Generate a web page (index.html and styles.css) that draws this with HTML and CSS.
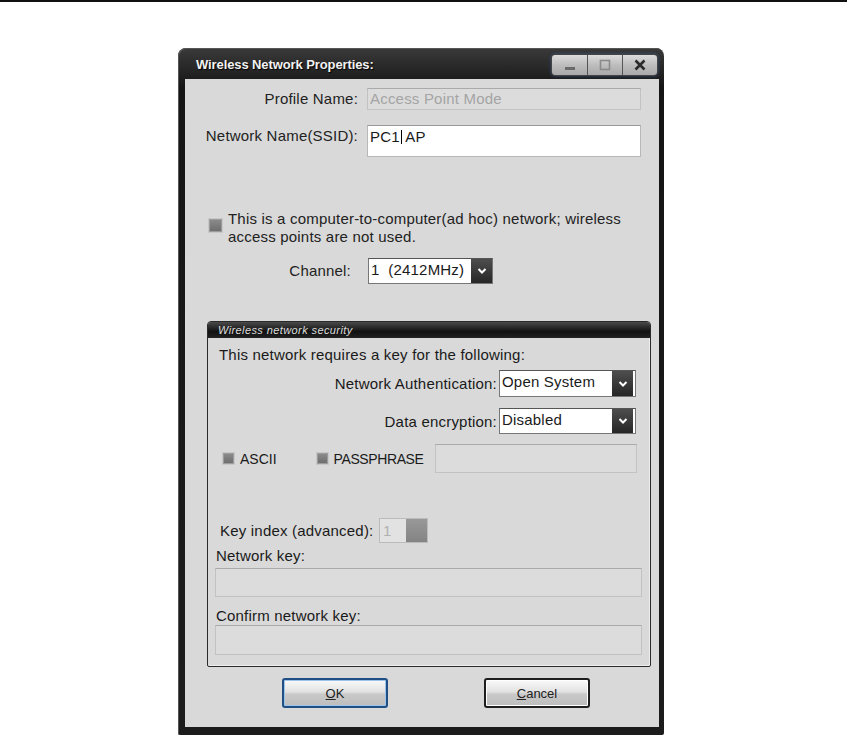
FILE: index.html
```html
<!DOCTYPE html>
<html lang="en">
<head>
  <meta charset="UTF-8">
  <title>Wireless Network Properties</title>
  <link rel="stylesheet" href="styles.css">
</head>
<body>
  <div class="rule"></div>
  <div class="window">
    <div class="titlebar">
      <span class="title">Wireless Network Properties:</span>
      <div class="win-btns">
        <span class="wbtn"><svg width="14" height="14" viewBox="0 0 14 14"><rect x="2" y="9" width="10" height="3" fill="#6a6a6a"/></svg></span>
        <span class="wbtn"><svg width="14" height="14" viewBox="0 0 14 14"><rect x="2.5" y="2.5" width="9" height="9" fill="none" stroke="#8a8a8a" stroke-width="1.6"/></svg></span>
        <span class="wbtn"><svg width="14" height="14" viewBox="0 0 14 14"><path d="M2.5 2.5 L11.5 11.5 M11.5 2.5 L2.5 11.5" stroke="#2a2a2a" stroke-width="2.6"/></svg></span>
      </div>
    </div>

    <div class="content">
      <div class="row">
        <span class="lbl">Profile Name:</span>
        <div class="field disabled short">Access Point Mode</div>
      </div>
      <div class="row ssid">
        <span class="lbl">Network Name(SSID):</span>
        <div class="field tall">PC1<span class="caret"></span> AP</div>
      </div>

      <div class="adhoc">
        <span class="check"></span>
        <p>This is a computer-to-computer(ad hoc) network; wireless<br>access points are not used.</p>
      </div>

      <div class="row channel">
        <span class="lbl">Channel:</span>
        <div class="select sel-channel">
          <span class="value">1&nbsp;&nbsp;(2412MHz)</span>
          <span class="arrow"><svg width="10" height="8" viewBox="0 0 10 8"><path d="M1.5 2 L5 5.5 L8.5 2" fill="none" stroke="#fff" stroke-width="2"/></svg></span>
        </div>
      </div>

      <div class="group">
        <div class="group-head">Wireless network security</div>
        <p class="intro">This network requires a key for the following:</p>

        <div class="pick auth">
          <span>Network Authentication:</span>
          <div class="select sel-wide">
            <span class="value">Open System</span>
            <span class="arrow"><svg width="10" height="8" viewBox="0 0 10 8"><path d="M1.5 2 L5 5.5 L8.5 2" fill="none" stroke="#fff" stroke-width="2"/></svg></span>
          </div>
        </div>
        <div class="pick enc">
          <span>Data encryption:</span>
          <div class="select sel-wide">
            <span class="value">Disabled</span>
            <span class="arrow"><svg width="10" height="8" viewBox="0 0 10 8"><path d="M1.5 2 L5 5.5 L8.5 2" fill="none" stroke="#fff" stroke-width="2"/></svg></span>
          </div>
        </div>

        <div class="keytype">
          <span class="check"></span><span class="opt ascii">ASCII</span>
          <span class="check"></span><span class="opt pp">PASSPHRASE</span>
          <div class="field disabled pass"></div>
        </div>

        <div class="keyindex">
          <span class="ki-lbl">Key index (advanced):</span>
          <div class="spin"><span class="spin-val">1</span><span class="spin-btn"></span></div>
        </div>

        <p class="small-lbl">Network key:</p>
        <div class="field disabled wide"></div>
        <p class="small-lbl confirm">Confirm network key:</p>
        <div class="field disabled wide last"></div>
      </div>

      <div class="actions">
        <button class="btn default"><u>O</u>K</button>
        <button class="btn"><u>C</u>ancel</button>
      </div>
    </div>
  </div>
</body>
</html>
```

FILE: styles.css
```css
* {
  margin: 0;
  padding: 0;
  box-sizing: border-box;
}
body {
  background: #fff;
  font-family: 'Liberation Sans', Arial, sans-serif;
  font-size: 15px;
  letter-spacing: 0.2px;
  color: #1a1a1a;
}
.rule {
  height: 2px;
  background: #111;
}
.window {
  width: 486px;
  margin: 46px 0 0 178px;
  background: linear-gradient(#3a3a3a, #151515 40px, #1c1c1c);
  border-radius: 8px 8px 2px 2px;
  padding: 0 5px 8px 7px;
  box-shadow: inset 1px 1px 0 #555;
}
.titlebar {
  height: 31px;
  display: flex;
  align-items: center;
  justify-content: space-between;
  padding-left: 11px;
}
.title {
  color: #f2f2f2;
  font-weight: bold;
  font-size: 13px;
  letter-spacing: -0.1px;
  text-shadow: 1px 1px 1px #000;
  margin-top: 2px;
}
.win-btns {
  display: flex;
  margin-right: 1px;
  margin-top: 2px;
  border: 1px solid #444;
  border-radius: 4px;
  overflow: hidden;
  box-shadow: 0 0 3px rgba(70, 120, 220, 0.5);
}
.wbtn {
  width: 35px;
  height: 20px;
  display: flex;
  align-items: center;
  justify-content: center;
  background: linear-gradient(#dcdcdc, #bdbdbd 50%, #a9a9a9);
  border-left: 1px solid #555;
}
.wbtn:first-child {
  border-left: none;
}
.content {
  background: #d9d9d9;
  height: 648px;
  padding-top: 9px;
  display: flex;
  flex-direction: column;
}
.row {
  display: flex;
  align-items: flex-start;
}
.lbl {
  width: 173px;
  margin-right: 9px;
  text-align: right;
  line-height: 22px;
  color: #222;
  white-space: nowrap;
}
.ssid {
  margin-top: 15px;
}
.field {
  background: #fff;
  border: 1px solid #b8b8b8;
  border-top-color: #999;
  padding: 2px 0 0 2px;
  line-height: 18px;
}
.field.short {
  width: 274px;
  height: 22px;
  padding-top: 1px;
}
.field.tall {
  width: 274px;
  height: 32px;
}
.field.disabled {
  background: #dcdcdc;
  border-color: #c2c2c2;
  border-top-color: #aaa;
  color: #a4a4a4;
}
.caret {
  display: inline-block;
  width: 1px;
  height: 14px;
  background: #000;
  vertical-align: -2px;
  margin-left: 1px;
}
.check {
  display: inline-block;
  width: 13px;
  height: 13px;
  background: linear-gradient(#8a8a8a, #6e6e6e);
  border: 1px solid #9c9c9c;
  box-shadow: 0 0 0 1px #c8c8c8;
  flex-shrink: 0;
}
.adhoc {
  display: flex;
  margin: 53px 0 0 24px;
}
.adhoc .check {
  margin-top: 9px;
  margin-right: 6px;
}
.adhoc p {
  line-height: 18px;
  color: #222;
  white-space: nowrap;
}
.channel {
  margin-top: 12px;
  align-items: center;
}
.channel .lbl {
  width: 166px;
  margin-right: 17px;
}
.select {
  display: flex;
  background: #fff;
  border: 1px solid #777;
  border-top-color: #555;
}
.select .value {
  flex: 1;
  padding-left: 2px;
  line-height: 22px;
  white-space: nowrap;
}
.arrow {
  width: 21px;
  display: flex;
  align-items: center;
  justify-content: center;
  background: linear-gradient(#4e4e4e, #262626);
}
.sel-channel {
  width: 125px;
  height: 26px;
}
.sel-wide {
  width: 137px;
  height: 27px;
}
.group {
  margin: 37px 0 0 22px;
  width: 444px;
  height: 346px;
  border: 1px solid #2a2a2a;
  border-radius: 4px 4px 2px 2px;
  box-shadow: inset -1px -1px 0 #eee;
}
.group-head {
  height: 16px;
  background: linear-gradient(#4a4a4a, #111 60%, #222);
  color: #ddd;
  font-size: 11px;
  font-style: italic;
  line-height: 16px;
  padding-left: 10px;
  border-radius: 3px 3px 0 0;
  letter-spacing: 0.4px;
}
.intro {
  margin: 8px 0 0 11px;
  line-height: 18px;
}
.pick {
  display: flex;
  justify-content: flex-end;
  align-items: center;
  padding-right: 14px;
}
.pick span {
  margin-right: 2px;
}
.auth {
  margin-top: 6px;
}
.enc {
  margin-top: 11px;
}
.enc .sel-wide {
  height: 26px;
}
.keytype {
  display: flex;
  align-items: center;
  margin: 10px 0 0 15px;
}
.keytype .check {
  width: 11px;
  height: 11px;
  margin-right: 6px;
}
.opt {
  font-size: 14px;
  letter-spacing: 0;
}
.opt.ascii {
  margin-right: 40px;
}
.opt.pp {
  letter-spacing: -0.4px;
}
.field.pass {
  width: 202px;
  height: 29px;
  margin-left: 12px;
}
.keyindex {
  display: flex;
  align-items: center;
  margin: 45px 0 0 12px;
}
.ki-lbl {
  width: 159px;
  white-space: nowrap;
}
.spin {
  display: flex;
  width: 49px;
  height: 25px;
  border: 1px solid #bbb;
}
.spin-val {
  flex: 1;
  background: #e2e2e2;
  color: #b0b0b0;
  padding-left: 3px;
  line-height: 23px;
}
.spin-btn {
  width: 21px;
  background: linear-gradient(#999, #838383);
}
.small-lbl {
  margin: 4px 0 0 8px;
  line-height: 17px;
}
.small-lbl.confirm {
  margin-top: 10px;
}
.field.wide {
  margin: 4px 0 0 7px;
  width: 427px;
  height: 29px;
}
.field.wide.last {
  margin-top: 1px;
  height: 30px;
}
.actions {
  display: flex;
  gap: 96px;
  margin: 11px 0 0 97px;
}
.btn {
  width: 106px;
  height: 30px;
  font-family: inherit;
  font-size: 13px;
  color: #222;
  background: linear-gradient(#fafafa, #e2e2e2 45%, #c9c9c9 55%, #bdbdbd);
  border: 2px solid #1e1e1e;
  border-radius: 3px;
  box-shadow: inset 0 0 0 1px #fff;
}
.btn.default {
  border-color: #1f4f84;
  box-shadow: inset 0 0 0 1px #9cc4ea;
}
```
